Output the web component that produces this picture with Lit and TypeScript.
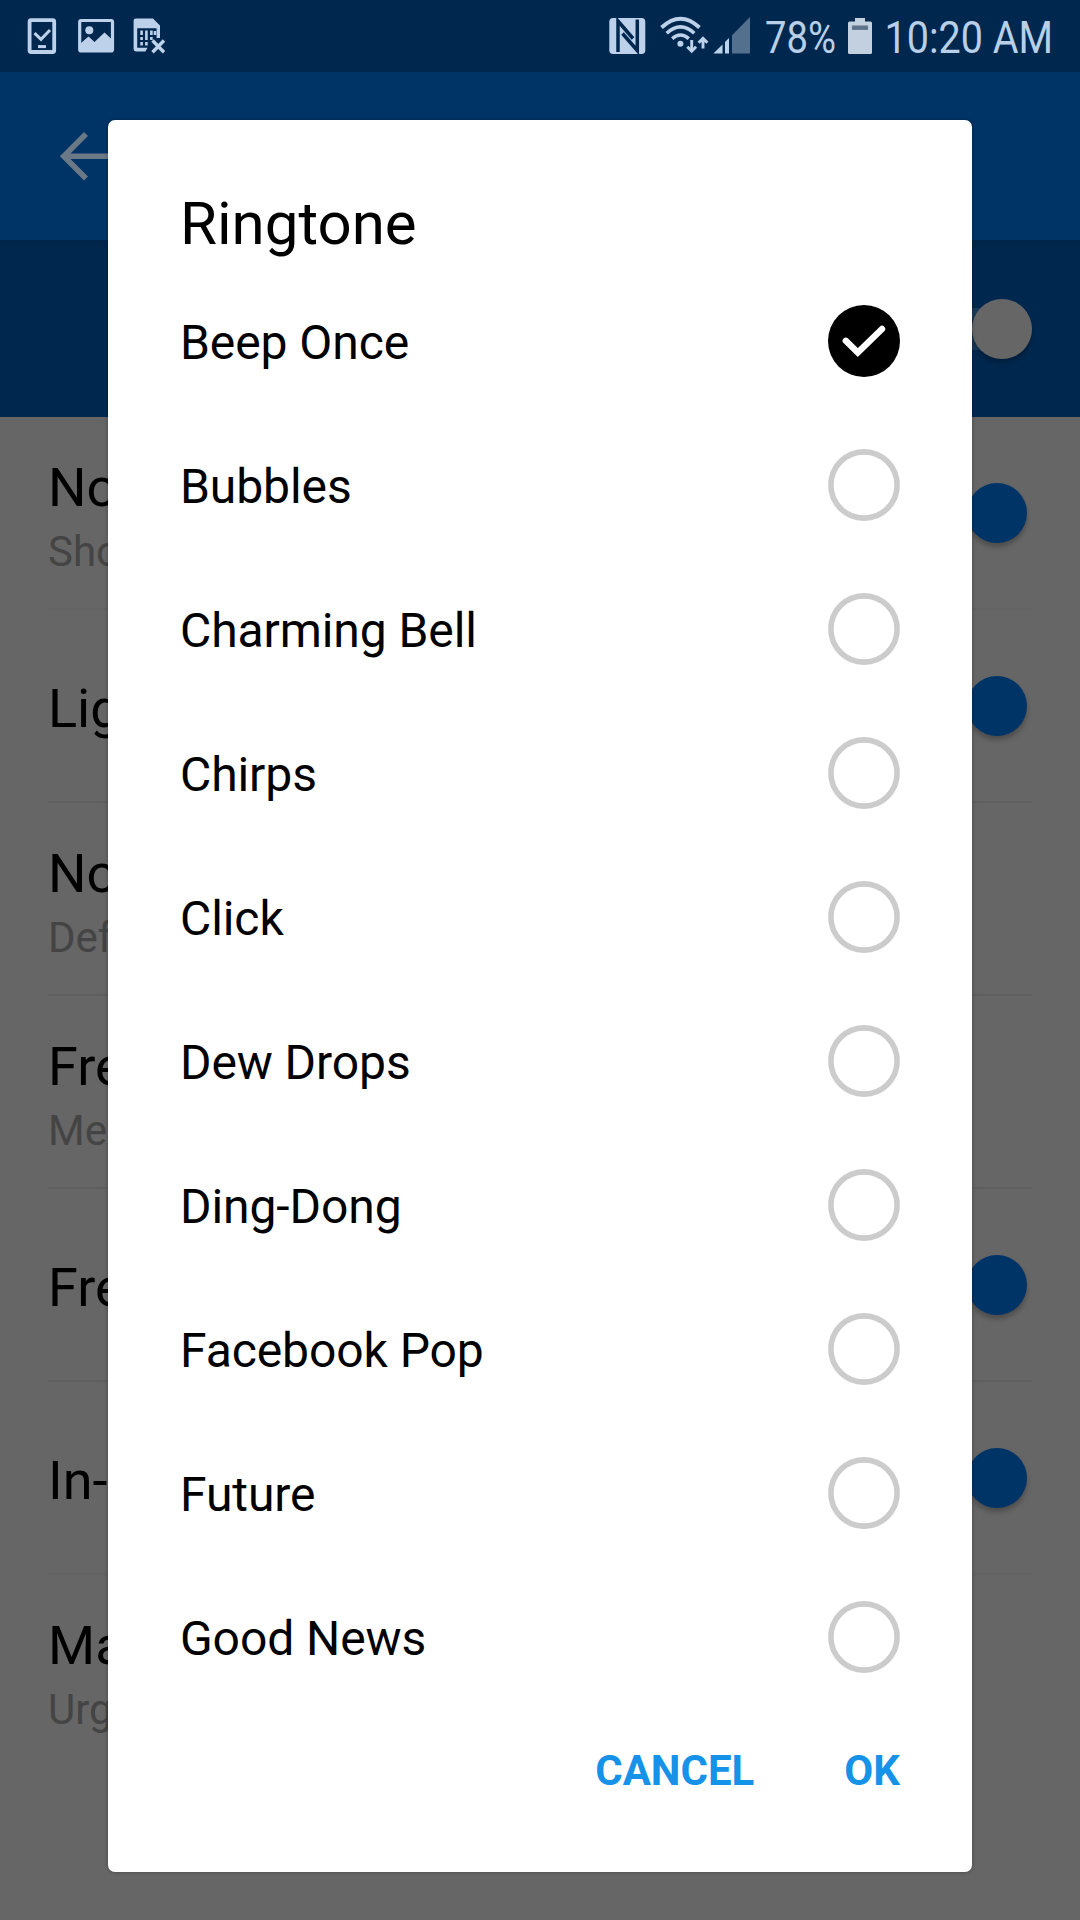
import { LitElement, html, css, svg, nothing } from "lit";
import { customElement, property, state } from "lit/decorators.js";

interface SettingRow {
  title: string;
  detail?: string;
  on?: boolean;
  faint?: boolean;
}

const SETTINGS: SettingRow[] = [
  { title: "No", detail: "Sho", on: true, faint: true },
  { title: "Lig", on: true },
  { title: "No", detail: "Def" },
  { title: "Fre", detail: "Me" },
  { title: "Fre", on: true },
  { title: "In-", on: true, faint: true },
  { title: "Ma", detail: "Urg" },
];

const TONES = [
  "Beep Once",
  "Bubbles",
  "Charming Bell",
  "Chirps",
  "Click",
  "Dew Drops",
  "Ding-Dong",
  "Facebook Pop",
  "Future",
  "Good News",
];

@customElement("status-bar")
class StatusBar extends LitElement {
  static styles = css`
    :host {
      display: flex;
      justify-content: space-between;
      height: 72px;
      background: #00284f;
    }
    .icons {
      display: block;
      height: 72px;
    }
    .label {
      font-family: Roboto, "Liberation Sans", sans-serif;
      font-size: 45px;
      fill: #b9cfe8;
    }
  `;

  render() {
    return html`
      <svg class="icons" width="180" height="72" viewBox="0 0 180 72" fill="none" stroke="#bdd2ea">
        <rect x="29.6" y="20.2" width="24.6" height="31.8" rx="1.5" stroke-width="3.8" />
        <path d="M34.5 33.2 41 39.3 50 30" stroke-width="3" />
        <path d="M38 46.6h8" stroke-width="3" />
        <rect x="79.7" y="20.5" width="32.8" height="30.4" rx="1.5" stroke-width="3.2" />
        <g fill="#bdd2ea" stroke="none">
          <circle cx="89.3" cy="30.2" r="4" />
          <path d="M81 43 88.5 36.5 94.5 42 104.5 32.5 112 39.5V52H81z" />
          <path
            d="M136 18.5h17l7 7V38h-3.4v-9.8H137.2V47.8h10.3l-2.2 3.7h-9.3a2.4 2.4 0 0 1-2.4-2.4V21a2.4 2.4 0 0 1 2.4-2.5z"
          />
        </g>
        <path
          d="M141.6 30.5v4.5M141.6 37v3M141.6 42v3.5M146.4 30.5v9.5M146.4 42v3.5M151.4 30.5v4.5M151.4 37v3M155 31v4"
          stroke-width="2.6"
        />
        <path d="M152.5 40.5 164 52.3M164 40.5 152.5 52.3" stroke-width="3.4" />
      </svg>
      <svg class="icons" width="480" height="72" viewBox="600 0 480 72">
        <rect x="609.3" y="18" width="36" height="36" rx="3.8" fill="#bdd2ea" />
        <path
          d="M618 52V21L633 38.5M637.3 19.5V50.5L622.5 33.5"
          fill="none"
          stroke="#00284f"
          stroke-width="3.5"
        />
        <g fill="none" stroke="#bdd2ea">
          <path d="M661.5 27.5Q680.5 9.8 699.5 27.5" stroke-width="3.8" />
          <path d="M666.7 33.2Q680.5 20.5 694.3 33.2" stroke-width="3.6" />
          <path d="M672.2 38.6Q680.5 31.4 688.8 38.6" stroke-width="3.4" />
          <path d="M691.7 40v11M687.3 46.8l4.4 4.4 4.4-4.4" stroke-width="2.9" />
          <path d="M703 48.5V38.5M698.6 42.8l4.4-4.4 4.4 4.4" stroke-width="2.9" />
        </g>
        <circle cx="680.4" cy="43.8" r="3" fill="#bdd2ea" />
        <path d="M732 35.2 750 17v36.4H732z" fill="#53718f" />
        <path d="M713.4 53.4 722.5 44.6v8.8z" fill="#bdd2ea" />
        <path d="M725 42 729 38v15.4h-4z" fill="#bdd2ea" />
        <text class="label" x="765" y="53" textLength="71" lengthAdjust="spacingAndGlyphs">78%</text>
        <path
          d="M855 18h10v3.4h5.5a1.5 1.5 0 0 1 1.5 1.5V52.5a1.5 1.5 0 0 1-1.5 1.5h-21a1.5 1.5 0 0 1-1.5-1.5V22.9a1.5 1.5 0 0 1 1.5-1.5h5.5z"
          fill="#c2d0df"
        />
        <rect x="852" y="25.5" width="16" height="4.4" fill="#5f7389" />
        <text class="label" x="884.5" y="53" textLength="168.5" lengthAdjust="spacingAndGlyphs">10:20 AM</text>
      </svg>
    `;
  }
}

@customElement("settings-page")
class SettingsPage extends LitElement {
  static styles = css`
    :host {
      display: flex;
      flex-direction: column;
      flex: 1;
      font-family: Roboto, "Liberation Sans", sans-serif;
    }
    .toolbar {
      display: flex;
      align-items: center;
      height: 168px;
      padding-left: 58px;
      background: #003467;
    }
    .master {
      display: flex;
      align-items: center;
      justify-content: flex-end;
      box-sizing: border-box;
      height: 177px;
      padding-right: 48px;
      background: linear-gradient(#00254a, #00284f 12px);
    }
    .track {
      display: flex;
      align-items: center;
      width: 92px;
      height: 42px;
      border-radius: 21px;
      background: #1a3a5b;
    }
    .knob {
      width: 60px;
      height: 60px;
      border-radius: 50%;
      background: #003467;
      box-shadow: 0 4px 5px rgba(0, 0, 0, 0.25);
    }
    .knob.off {
      margin-left: auto;
      background: #666;
    }
    .list {
      flex: 1;
      padding: 0 48px;
      background: #666;
    }
    .row {
      display: flex;
      align-items: center;
      justify-content: space-between;
      height: 191px;
      padding-right: 5px;
      border-bottom: 2px solid #5f5f5f;
    }
    .row.faint {
      border-bottom-color: #636363;
    }
    .row:last-child {
      border-bottom: none;
    }
    .texts {
      display: flex;
      flex-direction: column;
      gap: 7px;
      padding-top: 6px;
    }
    .texts.double {
      padding-top: 8px;
    }
    .title {
      font-size: 54px;
      line-height: 64px;
      color: #000;
    }
    .detail {
      font-size: 42px;
      line-height: 50px;
      color: #444;
    }
  `;

  render() {
    return html`
      <div class="toolbar">
        <svg width="60" height="56" viewBox="58 128 60 56" fill="none" stroke="#6b7885" stroke-width="5.6">
          <path d="M86 134 63.8 156.2 86 178.5M64 156.2h54" />
        </svg>
      </div>
      <div class="master"><div class="track"><div class="knob off"></div></div></div>
      <div class="list">
        ${SETTINGS.map(
          (s) => html`
            <div class="row ${s.faint ? "faint" : ""}">
              <div class="texts ${s.detail ? "double" : ""}">
                <div class="title">${s.title}</div>
                ${s.detail ? html`<div class="detail">${s.detail}</div>` : nothing}
              </div>
              ${s.on ? html`<div class="knob"></div>` : nothing}
            </div>
          `
        )}
      </div>
    `;
  }
}

@customElement("radio-mark")
class RadioMark extends LitElement {
  @property({ type: Boolean }) checked = false;

  static styles = css`
    :host {
      display: block;
      width: 72px;
      height: 72px;
    }
    .mark {
      display: block;
    }
  `;

  render() {
    return html`
      <svg class="mark" width="72" height="72" viewBox="0 0 72 72" fill="none">
        ${this.checked
          ? svg`<circle cx="36" cy="36" r="36" fill="#000" />
              <path d="M17.8 35.8 29.8 47.6 54 24" stroke="#fff" stroke-width="6.4" stroke-linecap="round" />`
          : svg`<circle cx="36" cy="36" r="33.1" stroke="#ccc" stroke-width="5.6" />`}
      </svg>
    `;
  }
}

@customElement("ringtone-dialog")
class RingtoneDialog extends LitElement {
  @state() private selected = 0;

  static styles = css`
    :host {
      display: flex;
      flex-direction: column;
      box-sizing: border-box;
      padding: 68px 72px 0;
      border-radius: 7px;
      background: #fff;
      box-shadow: 0 0 4px rgba(0, 0, 0, 0.3);
      font-family: Roboto, "Liberation Sans", sans-serif;
      color: #000;
    }
    .heading {
      margin-bottom: 9px;
      font-size: 60px;
      line-height: 72px;
    }
    .option {
      display: flex;
      align-items: center;
      justify-content: space-between;
      height: 144px;
      font-size: 48px;
      letter-spacing: -0.08px;
    }
    .name {
      padding-top: 3px;
    }
    .actions {
      display: flex;
      justify-content: flex-end;
      gap: 90px;
      padding-top: 38px;
      font-size: 42px;
      font-weight: 700;
      line-height: 48px;
      color: #1692e8;
    }
  `;

  render() {
    return html`
      <div class="heading">Ringtone</div>
      ${TONES.map(
        (tone, i) => html`
          <div class="option" @click=${() => (this.selected = i)}>
            <span class="name">${tone}</span>
            <radio-mark ?checked=${i === this.selected}></radio-mark>
          </div>
        `
      )}
      <div class="actions"><span>CANCEL</span><span>OK</span></div>
    `;
  }
}

@customElement("app-root")
class AppRoot extends LitElement {
  static styles = css`
    :host {
      display: flex;
      flex-direction: column;
      position: relative;
      width: 1080px;
      height: 1920px;
      overflow: hidden;
      background: #666;
    }
    .dialog {
      position: absolute;
      left: 108px;
      top: 120px;
      width: 864px;
      height: 1752px;
    }
  `;

  render() {
    return html`
      <status-bar></status-bar>
      <settings-page></settings-page>
      <ringtone-dialog class="dialog"></ringtone-dialog>
    `;
  }
}
